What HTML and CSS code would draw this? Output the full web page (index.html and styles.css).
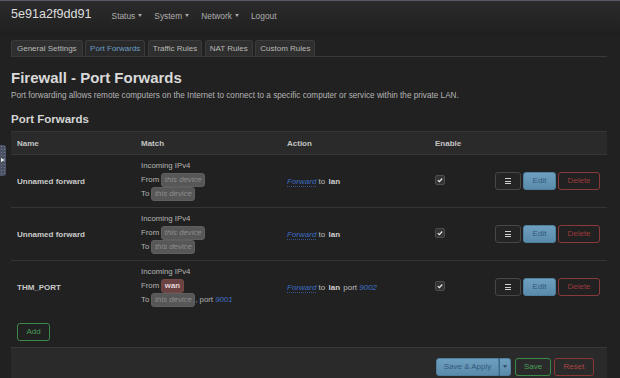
FILE: index.html
```html
<!DOCTYPE html>
<html lang="en">
<head>
<meta charset="utf-8">
<title>Firewall - Port Forwards</title>
<link rel="stylesheet" href="styles.css">
</head>
<body>
<header class="navbar">
  <span class="brand">5e91a2f9dd91</span>
  <nav class="menu">
    <span class="menu-item">Status <i class="caret"></i></span>
    <span class="menu-item">System <i class="caret"></i></span>
    <span class="menu-item">Network <i class="caret"></i></span>
    <span class="menu-item">Logout</span>
  </nav>
</header>

<div class="side-toggle"><span class="side-arrow"></span></div>

<main class="container">
  <ul class="tabs">
    <li class="tab">General Settings</li>
    <li class="tab active">Port Forwards</li>
    <li class="tab">Traffic Rules</li>
    <li class="tab">NAT Rules</li>
    <li class="tab">Custom Rules</li>
  </ul>

  <h2 class="page-title">Firewall - Port Forwards</h2>
  <p class="desc">Port forwarding allows remote computers on the Internet to connect to a specific computer or service within the private LAN.</p>

  <h3 class="section-title">Port Forwards</h3>

  <table class="rules">
    <thead>
      <tr>
        <th class="col-name">Name</th>
        <th class="col-match">Match</th>
        <th class="col-action">Action</th>
        <th class="col-enable">Enable</th>
        <th class="col-btns"></th>
      </tr>
    </thead>
    <tbody>
      <tr>
        <td class="name">Unnamed forward</td>
        <td class="match">
          <div>Incoming IPv4</div>
          <div>From <span class="badge">this device</span></div>
          <div>To <span class="badge">this device</span></div>
        </td>
        <td class="action"><span class="fwd">Forward</span> to <b>lan</b></td>
        <td class="enable"><span class="check"><svg viewBox="0 0 9 9" width="9" height="9"><path d="M2 4.6 L3.8 6.3 L7 2.8" fill="none" stroke="#eee" stroke-width="1.3"/></svg></span></td>
        <td class="btns">
          <button class="btn btn-menu"><span class="bars"></span></button><button class="btn btn-edit">Edit</button><button class="btn btn-delete">Delete</button>
        </td>
      </tr>
      <tr>
        <td class="name">Unnamed forward</td>
        <td class="match">
          <div>Incoming IPv4</div>
          <div>From <span class="badge">this device</span></div>
          <div>To <span class="badge">this device</span></div>
        </td>
        <td class="action"><span class="fwd">Forward</span> to <b>lan</b></td>
        <td class="enable"><span class="check"><svg viewBox="0 0 9 9" width="9" height="9"><path d="M2 4.6 L3.8 6.3 L7 2.8" fill="none" stroke="#eee" stroke-width="1.3"/></svg></span></td>
        <td class="btns">
          <button class="btn btn-menu"><span class="bars"></span></button><button class="btn btn-edit">Edit</button><button class="btn btn-delete">Delete</button>
        </td>
      </tr>
      <tr>
        <td class="name">THM_PORT</td>
        <td class="match">
          <div>Incoming IPv4</div>
          <div>From <span class="badge badge-wan">wan</span></div>
          <div>To <span class="badge">this device</span>, port <span class="num">9001</span></div>
        </td>
        <td class="action"><span class="fwd">Forward</span> to <b>lan</b> port <span class="num">9002</span></td>
        <td class="enable"><span class="check"><svg viewBox="0 0 9 9" width="9" height="9"><path d="M2 4.6 L3.8 6.3 L7 2.8" fill="none" stroke="#eee" stroke-width="1.3"/></svg></span></td>
        <td class="btns">
          <button class="btn btn-menu"><span class="bars"></span></button><button class="btn btn-edit">Edit</button><button class="btn btn-delete">Delete</button>
        </td>
      </tr>
    </tbody>
  </table>

  <div class="add-row"><button class="btn btn-add">Add</button></div>

  <div class="page-actions">
    <div class="split">
      <button class="btn btn-apply">Save &amp; Apply</button><button class="btn btn-apply-drop"><i class="caret caret-dark"></i></button>
    </div>
    <button class="btn btn-save">Save</button>
    <button class="btn btn-reset">Reset</button>
  </div>
</main>
</body>
</html>
```

FILE: styles.css
```css
* { box-sizing: border-box; }

html, body {
  margin: 0;
  padding: 0;
}

body {
  width: 620px;
  height: 378px;
  overflow: hidden;
  background: #212121;
  color: #c8c8c8;
  font-family: "Liberation Sans", Arial, sans-serif;
  position: relative;
}

/* ---------- navbar ---------- */
.navbar {
  height: 36px;
  border-top: 1px solid #565b66;
  background: linear-gradient(#2b2b2b, #1f1f1f);
  display: flex;
  align-items: center;
  padding: 0 0 8px 11px;
}

.brand {
  font-size: 12.6px;
  line-height: 14px;
  color: #dedede;
  margin-top: -1px;
}

.menu {
  display: flex;
  align-items: center;
  margin-left: 20px;
  gap: 12px;
  padding-top: 2px;
}

.menu-item {
  font-size: 8.4px;
  line-height: 10px;
  color: #adadad;
  display: flex;
  align-items: center;
  gap: 3px;
}

.caret {
  display: inline-block;
  width: 0;
  height: 0;
  border-top: 3px solid #a9a9a9;
  border-left: 2.5px solid transparent;
  border-right: 2.5px solid transparent;
}

/* ---------- side toggle ---------- */
.side-toggle {
  position: absolute;
  left: 0;
  top: 145px;
  width: 6px;
  height: 31px;
  background-color: #4a5264;
  background-image: radial-gradient(circle, #6f788c 0.6px, transparent 0.9px);
  background-size: 3px 3px;
  border-radius: 0 3px 3px 0;
}

.side-arrow {
  position: absolute;
  left: 1px;
  top: 13px;
  width: 0;
  height: 0;
  border-left: 4px solid #e6e6e6;
  border-top: 2.5px solid transparent;
  border-bottom: 2.5px solid transparent;
}

/* ---------- container ---------- */
.container {
  padding: 0 13px 0 11px;
}

.tabs {
  list-style: none;
  margin: 4px 0 0;
  padding: 0;
  display: flex;
  gap: 2.5px;
  border-bottom: 1px solid #393939;
}

.tab {
  font-size: 8px;
  line-height: 10px;
  padding: 3px 4px 2px;
  background: #2f2f2f;
  color: #b9b9b9;
  border: 1px solid #3b3b3b;
  border-bottom: none;
  border-radius: 3px 3px 0 0;
}

.tab:first-child { padding: 3px 5px 2px; }

.tab.active {
  background: #292929;
  color: #6c9ec2;
}

.page-title {
  font-size: 15px;
  line-height: 18px;
  font-weight: bold;
  color: #d9d9d9;
  margin: 12px 0 0;
}

.desc {
  font-size: 8.2px;
  line-height: 10px;
  color: #b4b4b4;
  margin: 4px 0 0;
}

.section-title {
  font-size: 11.5px;
  line-height: 14px;
  font-weight: bold;
  color: #d4d4d4;
  margin: 11px 0 0;
}

/* ---------- table ---------- */
.rules {
  width: 100%;
  margin-top: 5px;
  border-collapse: collapse;
  table-layout: fixed;
  font-size: 8px;
}

.rules thead tr {
  background: #2a2a2a;
  border-top: 1px solid #363636;
  border-bottom: 1px solid #363636;
}

.rules th {
  height: 23px;
  padding: 0 6px;
  text-align: left;
  font-weight: bold;
  color: #c4c4c4;
}

.col-name { width: 124px; }
.col-match { width: 146px; }
.col-action { width: 148px; }
.col-enable { width: 60px; }

.rules tbody tr + tr {
  border-top: 1px solid #353535;
}

.rules td {
  padding: 0 6px;
  vertical-align: middle;
}

.rules td.name {
  font-weight: bold;
  color: #c9c9c9;
}

.rules td.match {
  font-size: 7.8px;
  line-height: 14px;
  color: #b4b4b4;
  padding: 4px 6px 6px;
}

.badge {
  display: inline-block;
  line-height: 12px;
  padding: 0 2.5px;
  background: #575757;
  color: #8d8d8d;
  font-style: italic;
  border-radius: 3px;
  border: 1px solid #5f5f5f;
}

.badge-wan {
  background: #6b4242;
  border-color: #734848;
  color: #e3d6d6;
  font-style: normal;
  font-weight: bold;
}

.num {
  color: #3f6fc8;
  font-style: italic;
}

.rules td.action {
  color: #bdbdbd;
}

.rules td.action b {
  color: #d0d0d0;
  margin-left: 1px;
  margin-right: 1px;
}

.fwd {
  color: #3d6cc4;
  font-style: italic;
  text-decoration: underline dotted #34558f;
  text-underline-offset: 2px;
}

.check {
  display: inline-flex;
  width: 10px;
  height: 10px;
  background: #343434;
  border: 1px solid #4d4d4d;
  border-radius: 2px;
  align-items: center;
  justify-content: center;
  vertical-align: middle;
  margin-top: -2px;
}

.check svg { width: 8px; height: 8px; }

.rules td.btns {
  text-align: right;
  padding-right: 7px;
  white-space: nowrap;
  font-size: 0;
}

/* ---------- buttons ---------- */
.btn {
  font-family: inherit;
  font-size: 8px;
  height: 18px;
  line-height: 16px;
  padding: 0;
  border: 1px solid transparent;
  border-radius: 3px;
  background: transparent;
  vertical-align: middle;
  cursor: pointer;
}

.btns .btn + .btn { margin-left: 2px; }

.btn-menu {
  width: 26px;
  background: #242424;
  border-color: #474747;
  display: inline-flex;
  align-items: center;
  justify-content: center;
}

.bars {
  display: block;
  width: 6px;
  height: 6px;
  border-top: 1px solid #cfcfcf;
  border-bottom: 1px solid #cfcfcf;
  position: relative;
}

.bars::after {
  content: "";
  position: absolute;
  left: 0;
  right: 0;
  top: 1.5px;
  height: 1px;
  background: #cfcfcf;
}

.btn-edit,
.btn-apply,
.btn-apply-drop {
  background: linear-gradient(#6e9fbe, #5a8bab);
  border-color: #4e7f9f;
  color: #35597a;
}

.btn-edit { width: 33px; }

.btn-delete {
  width: 42px;
  border-color: #8a3a3a;
  color: #9d3a3a;
}

.add-row {
  margin-top: 9px;
  padding-left: 6px;
}

.btn-add {
  width: 33px;
  border-color: #3c8849;
  color: #4b9b58;
}

.page-actions {
  margin-top: 6px;
  background: #2a2a2a;
  border-top: 1px solid #383838;
  padding: 10px 13px 11px 0;
  display: flex;
  justify-content: flex-end;
  align-items: center;
  gap: 3px;
}

.split {
  display: flex;
  margin-right: 1px;
}

.btn-apply {
  width: 63px;
  border-radius: 3px 0 0 3px;
}

.btn-apply-drop {
  width: 12px;
  border-radius: 0 3px 3px 0;
  border-left-color: #3e6a88;
  display: inline-flex;
  align-items: center;
  justify-content: center;
}

.caret-dark {
  border-top-color: #2f4f68;
}

.btn-save {
  width: 36px;
  border-color: #3b8946;
  color: #4c9f59;
}

.btn-reset {
  width: 40px;
  border-color: #8c3737;
  color: #ae4343;
}
```
